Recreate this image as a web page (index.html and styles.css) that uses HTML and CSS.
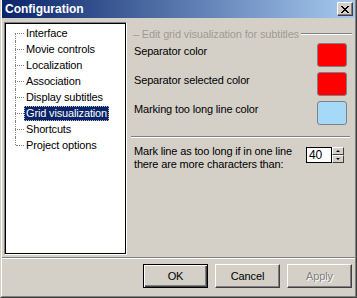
FILE: index.html
```html
<html>
<head>
<link rel="stylesheet" href="styles.css">
</head>
<body>
<div class="window">
 <div class="frame">
  <div class="titlebar">
   <span class="title">Configuration</span>
   <div class="close">
    <svg width="8" height="7" viewBox="0 0 8 7" shape-rendering="crispEdges">
     <path d="M0 0h2v1h-2z M6 0h2v1h-2z M1 1h2v1h-2z M5 1h2v1h-2z M2 2h4v1h-4z M3 3h2v1h-2z M2 4h4v1h-4z M1 5h2v1h-2z M5 5h2v1h-2z M0 6h2v1h-2z M6 6h2v1h-2z" fill="#000"/>
    </svg>
   </div>
  </div>

  <div class="main">
   <div class="tree">
    <ul>
     <li class="first"><span class="branch"></span><span class="label">Interface</span></li>
     <li><span class="branch"></span><span class="label">Movie controls</span></li>
     <li><span class="branch"></span><span class="label">Localization</span></li>
     <li><span class="branch"></span><span class="label">Association</span></li>
     <li><span class="branch"></span><span class="label">Display subtitles</span></li>
     <li class="selected"><span class="branch"></span><span class="label">Grid visualization</span></li>
     <li><span class="branch"></span><span class="label">Shortcuts</span></li>
     <li class="last"><span class="branch"></span><span class="label">Project options</span></li>
    </ul>
   </div>

   <div class="panel">
    <div class="group_title">
     <span>&ndash; Edit grid visualization for subtitles</span>
     <div class="etched"></div>
    </div>

    <div class="color_row">
     <span class="caption">Separator color</span>
     <div class="swatch red"></div>
    </div>
    <div class="color_row">
     <span class="caption">Separator selected color</span>
     <div class="swatch red"></div>
    </div>
    <div class="color_row">
     <span class="caption">Marking too long line color</span>
     <div class="swatch blue"></div>
    </div>

    <div class="etched panel_sep"></div>

    <div class="spin_row">
     <span class="caption">Mark line as too long if in one line<br>there are more characters than:</span>
     <div class="spin">
      <div class="spin_edit">40</div>
      <div class="spin_buttons">
       <div class="spin_btn"><span class="arrow up"></span></div>
       <div class="spin_btn"><span class="arrow down"></span></div>
      </div>
     </div>
    </div>
   </div>
  </div>

  <div class="etched footer_sep"></div>

  <div class="footer">
   <div class="button default"><span>OK</span></div>
   <div class="button"><span>Cancel</span></div>
   <div class="button disabled"><span>Apply</span></div>
  </div>
 </div>
</div>
</body>
</html>
```

FILE: styles.css
```css
*
{
	font-family: "Liberation Sans", Arial, sans-serif;
	font-size: 11px;
	letter-spacing: -0.15px;
	box-sizing: border-box;
}

body
{
	margin: 0;
	padding: 0;
	background: #d4d0c8;
}

.window
{
	width: 357px;
	height: 298px;
	border: 1px solid;
	border-top: 0;
	border-color: #404040 #404040 #404040 #d4d0c8;
	background: #d4d0c8;
}

.frame
{
	height: 100%;
	border: 1px solid;
	border-top: 0;
	border-color: #808080 #808080 #808080 #ffffff;
	display: flex;
	flex-direction: column;
}

.titlebar
{
	height: 18px;
	background: linear-gradient(to right, #0a246a, #a6caf0);
	display: flex;
	align-items: center;
	padding: 0 2px 0 3px;
}

.title
{
	color: #fff;
	font-weight: bold;
	font-size: 12px;
	letter-spacing: 0;
	flex: 1;
}

.close
{
	width: 16px;
	height: 14px;
	background: #d4d0c8;
	border: 1px solid;
	border-color: #fff #404040 #404040 #fff;
	box-shadow: inset -1px -1px #808080;
	display: flex;
	align-items: center;
	justify-content: center;
	padding-right: 1px;
}

.main
{
	height: 239px;
	display: flex;
	padding: 4px 3px 2px 2px;
	gap: 4px;
}

.tree
{
	width: 123px;
	border: 1px solid;
	border-color: #808080 #fff #fff #808080;
	background: #fff;
	box-shadow: inset 1px 1px #000, inset -1px -1px #000;
	padding: 2px 0 0 1px;
}

.tree ul
{
	list-style: none;
	margin: 0;
	padding: 0 0 0 9px;
}

.tree li
{
	display: flex;
	height: 16px;
	align-items: center;
}

.branch
{
	width: 9px;
	height: 16px;
	flex: none;
	display: flex;
	flex-direction: column;
}

.branch::before,
.branch::after
{
	content: "";
	height: 8px;
	border-left: 1px dotted #808080;
}

.branch::after
{
	border-top: 1px dotted #808080;
}

.tree li.first .branch::before
{
	border-left: 0;
}

.tree li.last .branch::after
{
	border-left: 0;
	margin-left: 1px;
}

.label
{
	padding: 1px 2px;
	line-height: 13px;
	white-space: nowrap;
	color: #000;
}

.selected .label
{
	background: #0a246a;
	color: #fff;
	outline: 1px dotted #c0c0c0;
	outline-offset: -1px;
}

.panel
{
	flex: 1;
	display: flex;
	flex-direction: column;
}

.group_title
{
	display: flex;
	align-items: center;
	margin-top: 5px;
	padding-left: 2px;
	height: 13px;
	color: #a09c94;
	gap: 2px;
}

.group_title .etched
{
	flex: 1;
}

.etched
{
	height: 2px;
	border-top: 1px solid #808080;
	border-bottom: 1px solid #fff;
}

.color_row
{
	display: flex;
	justify-content: space-between;
	align-items: flex-start;
	margin-top: 3px;
	padding: 0 5px 0 3px;
	height: 24px;
}

.color_row + .color_row
{
	margin-top: 5px;
}

.caption
{
	margin-top: 2px;
	line-height: 13px;
	color: #000;
}

.swatch
{
	width: 30px;
	height: 24px;
	border: 1px solid #808080;
	border-radius: 3px;
}

.red
{
	background: #ff0000;
}

.blue
{
	background: #a6d8f8;
}

.panel_sep
{
	margin: 11px 2px 0 0;
}

.spin_row
{
	display: flex;
	justify-content: space-between;
	padding: 5px 8px 0 3px;
}

.spin
{
	display: flex;
	margin-top: 4px;
	height: 16px;
}

.spin_edit
{
	width: 26px;
	height: 16px;
	background: #fff;
	border: 1px solid #000;
	padding: 1px 0 0 2px;
	font-size: 12px;
	line-height: 13px;
}

.spin_buttons
{
	display: flex;
	flex-direction: column;
}

.spin_btn
{
	width: 12px;
	height: 8px;
	background: #d4d0c8;
	border: 1px solid;
	border-color: #fff #404040 #404040 #fff;
	display: flex;
	align-items: center;
	justify-content: center;
}

.arrow
{
	width: 0;
	height: 0;
	border-left: 2px solid transparent;
	border-right: 2px solid transparent;
}

.arrow.up
{
	border-bottom: 2px solid #000;
}

.arrow.down
{
	border-top: 2px solid #000;
}

.footer_sep
{
	margin: 0;
}

.footer
{
	display: flex;
	justify-content: flex-end;
	gap: 7px;
	padding: 5px 3px 0 0;
}

.button
{
	width: 65px;
	height: 24px;
	border: 1px solid;
	border-color: #fff #404040 #404040 #fff;
	box-shadow: inset -1px -1px #808080;
	display: flex;
	align-items: center;
	justify-content: center;
	color: #000;
}

.button.default
{
	border: 1px solid #000;
	box-shadow: inset 1px 1px #fff, inset -1px -1px #404040, inset -2px -2px #808080;
}

.button.disabled
{
	color: #808080;
	text-shadow: 1px 1px #fff;
}
```
